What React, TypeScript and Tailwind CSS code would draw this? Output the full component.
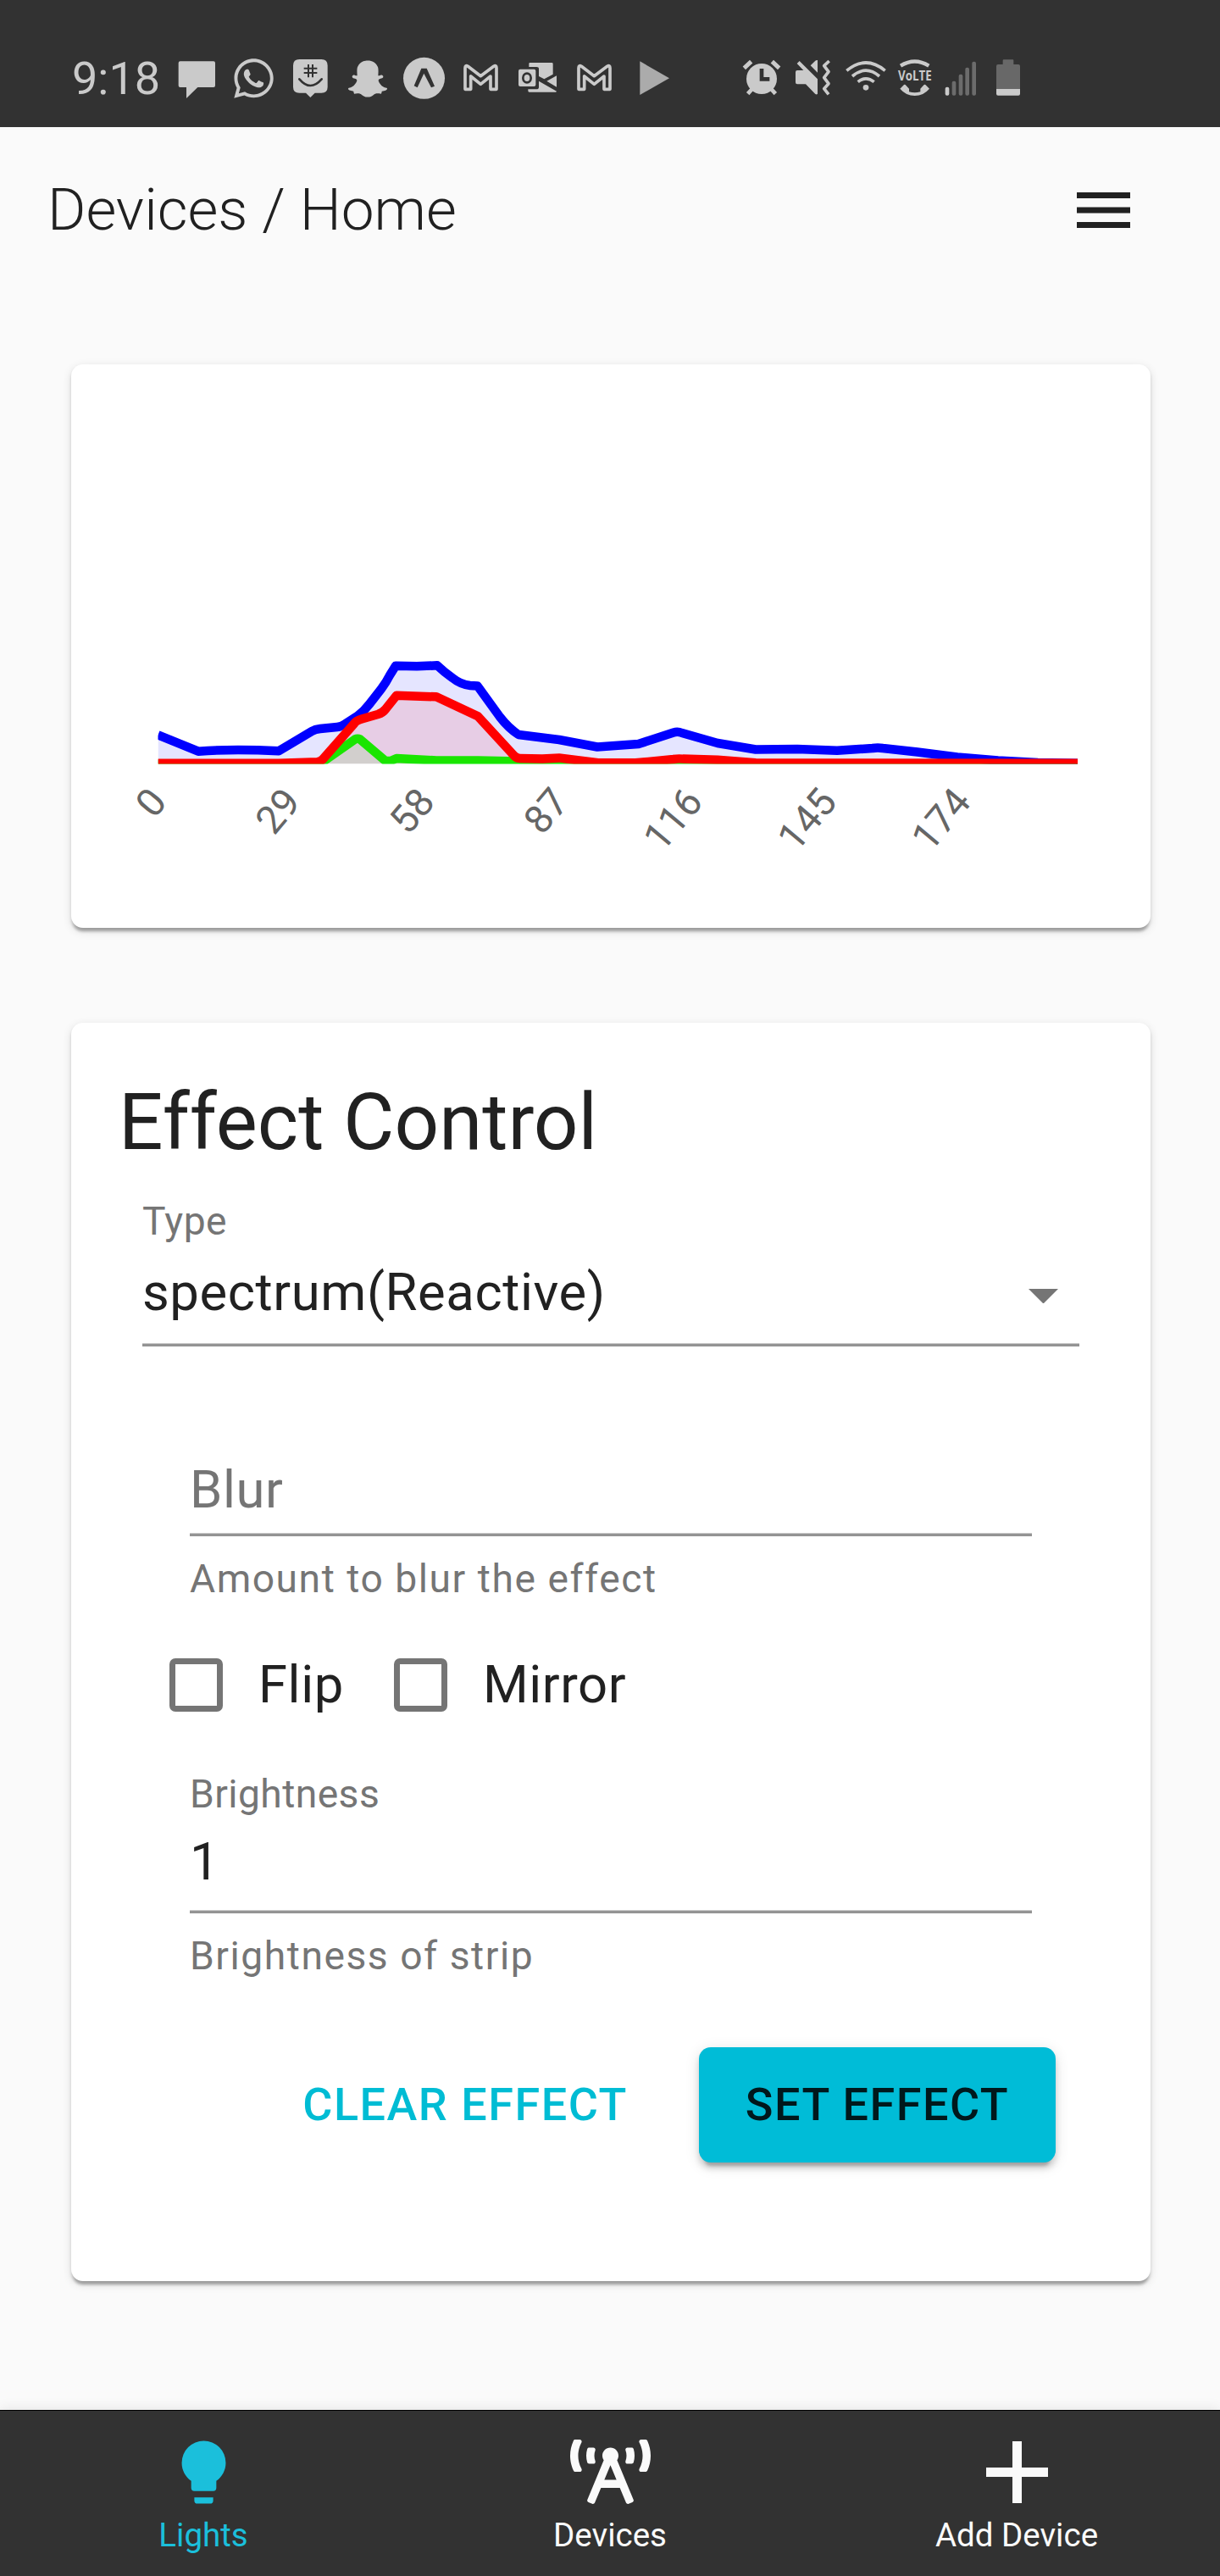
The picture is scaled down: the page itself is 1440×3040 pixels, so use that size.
import React from 'react';
import { FaBroadcastTower, FaSnapchatGhost, FaWhatsapp } from 'react-icons/fa';

const LIGHT = '#cacaca';
const DARK = '#323232';

function StatusIcon({ box, className, children }: { box: string; className?: string; children: React.ReactNode }) {
  return (
    <svg viewBox={box} className={`h-[60px] shrink-0 ${className ?? 'w-[67px]'}`} fill={LIGHT}>
      {children}
    </svg>
  );
}

function GmailIcon() {
  return (
    <StatusIcon box="312 60 201 180">
      <path
        d="M357 196V121Q357 109 367 115L412 149L458 115Q468 109 468 121V196H447V150L412 178L377 150V196Z"
        fill="none"
        stroke={LIGHT}
        strokeWidth="11"
        strokeLinejoin="round"
      />
    </StatusIcon>
  );
}

function StatusBar() {
  return (
    <div className="flex h-[150px] items-start bg-[#323232] pt-[60px]">
      <div className="w-[199px] shrink-0 pl-[85px] text-[54px] leading-[66px] text-[#cacaca]">9:18</div>
      <StatusIcon box="417 60 201 180">
        <path d="M458 97H576Q582 97 582 103V183Q582 189 576 189H520L480 228V189H458Q452 189 452 183V103Q452 97 458 97Z" />
      </StatusIcon>
      <div className="flex h-[60px] w-[67px] shrink-0 justify-center pt-[6px] text-[#cacaca]">
        <FaWhatsapp className="h-[53px] w-[53px]" />
      </div>
      <StatusIcon box="819 60 201 180">
        <path d="M880 90H958Q980 90 980 112V188Q980 209 958 209H935L919 225L903 209H880Q858 209 858 188V112Q858 90 880 90Z" />
        <path d="M912 108V154M927 108V154M896 122H943M896 138H943" stroke={DARK} strokeWidth="6" />
        <path d="M880 160Q919 206 959 160" fill="none" stroke={DARK} strokeWidth="8" strokeLinecap="round" />
      </StatusIcon>
      <div className="flex h-[60px] w-[67px] shrink-0 justify-center pt-[10px] text-[#cacaca]">
        <FaSnapchatGhost className="h-[46px] w-[46px]" />
      </div>
      <StatusIcon box="111 60 201 180">
        <circle cx="211.500" cy="157" r="73.500" />
        <path d="M202 122H221L249 185L237 190L211 140L188 190L176 184Z" fill={DARK} />
      </StatusIcon>
      <GmailIcon />
      <StatusIcon box="513 60 201 180">
        <path d="M586 102H664Q668 102 668 106V143L637 160L618 150V124Q618 117 610 117H583V105Q583 102 586 102Z" />
        <path d="M681 148V188L646 167Z" />
        <path d="M580 196H609Q618 196 618 188V167L681 203Q680 206 677 206H584Q580 206 580 202Z" />
        <rect x="546" y="125" width="61" height="61" rx="6" />
        <ellipse cx="576" cy="156" rx="14" ry="16" fill="none" stroke={DARK} strokeWidth="8" />
      </StatusIcon>
      <GmailIcon />
      <StatusIcon box="915 60 201 180">
        <path d="M976 97L1080 157L976 216Z" fill="#ababab" />
      </StatusIcon>
      <div className="w-[68px] shrink-0" />
      <StatusIcon box="90 60 180 180" className="w-[60px]">
        <circle cx="177" cy="159" r="54" />
        <path d="M115 121L140 98M214 98L239 121" stroke={LIGHT} strokeWidth="15" />
        <path d="M146 192L128 212M208 192L226 212" stroke={LIGHT} strokeWidth="14" />
        <path d="M177 123V160H205" fill="none" stroke={DARK} strokeWidth="14" />
      </StatusIcon>
      <StatusIcon box="270 60 180 180" className="w-[60px]">
        <path d="M303 129H325L302 105L311 96L375 160V212Q372 216 367 213L333 178H303Q297 178 297 172V135Q297 129 303 129Z" />
        <path d="M375 93V137L350 112L367 95Q371 92 375 93Z" />
        <path
          d="M416 96L398 113L414 134L398 155L414 176L398 194L414 214"
          fill="none"
          stroke={LIGHT}
          strokeWidth="11"
          strokeLinejoin="round"
        />
      </StatusIcon>
      <StatusIcon box="450 60 180 180" className="w-[60px]">
        <circle cx="546" cy="190" r="10" />
        <path
          d="M478 130Q546 74 614 130M498 150Q546 109 594 150M518 170Q546 147 575 170"
          fill="none"
          stroke={LIGHT}
          strokeWidth="11"
        />
      </StatusIcon>
      <StatusIcon box="630 60 180 180" className="w-[60px]">
        <path d="M669 113Q719 82 769 113" fill="none" stroke={LIGHT} strokeWidth="13" />
        <text
          x="660"
          y="166"
          fontSize="47"
          fontWeight="700"
          textLength="119"
          lengthAdjust="spacingAndGlyphs"
          style={{ fontFamily: '"Open Sans", sans-serif' }}
        >
          VoLTE
        </text>
        <path d="M667 194L681 180Q685 178 688 182L699 194V205Q719 211 739 205V194L750 182Q753 178 757 180L771 194Q750 219 719 219Q688 219 667 194Z" />
      </StatusIcon>
      <StatusIcon box="810 60 150 180" className="w-[50px]">
        <rect x="827" y="188" width="14" height="30" rx="6" />
        <g fill="#6c6c6c">
          <rect x="851" y="167" width="14" height="51" rx="6" />
          <rect x="875" y="143" width="14" height="75" rx="6" />
          <rect x="898" y="119" width="14" height="99" rx="6" />
          <rect x="922" y="98" width="14" height="120" rx="6" />
        </g>
      </StatusIcon>
      <StatusIcon box="960 60 150 180" className="w-[50px]">
        <path d="M1031 108V94Q1031 91 1034 91H1066Q1069 91 1069 94V108H1086Q1092 108 1092 114V195H1008V114Q1008 108 1014 108Z" fill="#686868" />
        <path d="M1008 195H1092V212Q1092 218 1086 218H1014Q1008 218 1008 212Z" />
      </StatusIcon>
    </div>
  );
}

const BLUE =
  'M186.500 867.300L234 886.700Q258 885 281 885T329 886.300L368 863Q372 860.700 378 860L398 858Q403 857.500 408 854L422 845Q430 839 436 831L450 813Q456 805 460 797L467 785.700L492 786.300L516 785.300Q524 793 534 800Q544 808 555 809L563.600 809.500L590 846Q600 859 612 867L660 873L705 881.500L753.600 878L795 864.500Q800 863 805 865L847 877L892 884.500L941 884L988 885.800L1030 883Q1036 882 1042 883L1083 887.500L1130 893.500L1178 897.500L1225 900L1272 900.700';
const GREEN =
  'M186.500 901.500H370Q378 901.500 384 897L419 872.500Q422 871 425 872.500L455 898L461 898L468 895L515 897.500L564 897.500L612 898.500L660 900L706 901.300H1272';
const RED =
  'M186.500 900.700H329L374 899.300Q378 899 381 896L418 854Q420 850.500 427 848.500L446 843Q452 841 455 837L468 820.700L515 822.300L564 845.300L607 892Q610 895 614 895L640 895.400L660 894.400L706 900.300L750 900.300L795 896Q800 895 806 895.600L847 896.700L892 900.300L1272 900.700';

const TICKS = ['0', '29', '58', '87', '116', '145', '174'];

function SpectrumChart() {
  const area = (d: string) => `${d}V901.500H186.500Z`;
  return (
    <svg viewBox="84 430 1274 665" className="h-[665px] w-[1274px]" fill="none">
      <defs>
        <clipPath id="plot">
          <rect x="186.500" y="500" width="1085.500" height="401.500" />
        </clipPath>
      </defs>
      <g clipPath="url(#plot)" strokeWidth="10.500" strokeLinejoin="round">
        <path d={area(BLUE)} fill="#0000ff" fillOpacity="0.1" />
        <path d={BLUE} stroke="#0000ff" />
        <path d={area(GREEN)} fill="#00ff00" fillOpacity="0.1" />
        <path d={GREEN} stroke="#00ff00" />
        <path d={area(RED)} fill="#ff0000" fillOpacity="0.1" />
        <path d={RED} stroke="#ff0000" />
      </g>
      <g fill="#666666" fontSize="46.200" textAnchor="end">
        {TICKS.map((label, i) => (
          <text key={label} transform={`translate(${186.5 + i * 158.2} 937) rotate(-50)`} y="16">
            {label}
          </text>
        ))}
      </g>
    </svg>
  );
}

const CARD =
  'rounded-[14px] bg-white shadow-[0_7px_3.5px_-3.5px_rgba(0,0,0,0.2),0_3.5px_3.5px_0_rgba(0,0,0,0.14),0_3.5px_10.5px_0_rgba(0,0,0,0.12)]';

function Underline() {
  return <div className="h-[3px] bg-[#949494] shadow-[0_-1px_0_#c9c9c9]" />;
}

function Check({ label }: { label: string }) {
  return (
    <label className="flex items-center">
      <span className="h-[63px] w-[63px] rounded-[7px] border-[7px] border-[#757575]" />
      <span className="ml-[42px] text-[61.6px] leading-[64px] tracking-[0.00938em]">{label}</span>
    </label>
  );
}

function EffectControl() {
  return (
    <section className={`h-[1485px] pt-[56px] ${CARD}`}>
      <h2 className="ml-[56px] text-[92.4px] leading-[123px]">Effect Control</h2>
      <div className="mt-[32px] ml-[84px] w-[1106px]">
        <div className="text-[46.2px] leading-[46px] tracking-[0.00938em] text-[#757575]">Type</div>
        <div className="mt-[24px] flex h-[75px] items-center justify-between">
          <span className="text-[61.6px] leading-[75px] tracking-[0.00938em]">spectrum(Reactive)</span>
          <svg viewBox="7 10 10 5" className="mt-[8px] mr-[25px] h-[17.5px] w-[35px]" fill="#757575">
            <path d="M7 10l5 5 5-5z" />
          </svg>
        </div>
        <div className="mt-[23px]">
          <Underline />
        </div>
      </div>
      <div className="mt-[133px] ml-[140px] w-[994px] text-[#757575]">
        <div className="text-[61.6px] leading-[72px] tracking-[0.00938em]">Blur</div>
        <div className="mt-[16px]">
          <Underline />
        </div>
        <div className="mt-[27px] text-[46.2px] leading-[46px] tracking-[0.03333em]">Amount to blur the effect</div>
      </div>
      <div className="mt-[70px] ml-[116px] flex h-[64px] gap-[59px]">
        <Check label="Flip" />
        <Check label="Mirror" />
      </div>
      <div className="mt-[74px] ml-[140px] w-[994px]">
        <div className="text-[46.2px] leading-[46px] tracking-[0.00938em] text-[#757575]">Brightness</div>
        <div className="mt-[21px] text-[61.6px] leading-[72px] tracking-[0.00938em]">1</div>
        <div className="mt-[22px]">
          <Underline />
        </div>
        <div className="mt-[27px] text-[46.2px] leading-[46px] tracking-[0.03333em] text-[#757575]">Brightness of strip</div>
      </div>
      <div className="mt-[85px] mr-[112px] flex h-[136px] items-stretch justify-end text-[53.9px] font-medium tracking-[0.02857em] whitespace-nowrap">
        <button className="mr-[28px] px-[56px] text-[#00bcd4]">CLEAR EFFECT</button>
        <button className="w-[421px] rounded-[14px] bg-[#00bcd7] text-black/87 shadow-[0_10.5px_3.5px_-7px_rgba(0,0,0,0.2),0_7px_7px_0_rgba(0,0,0,0.14),0_3.5px_17.5px_0_rgba(0,0,0,0.12)]">
          SET EFFECT
        </button>
      </div>
    </section>
  );
}

function NavItem({ label, className, children }: { label: string; className: string; children: React.ReactNode }) {
  return (
    <div className={`flex flex-1 flex-col items-center pt-[27px] ${className}`}>
      <div className="flex h-[90px] items-center justify-center">{children}</div>
      <span className="mt-[7px] text-[38.5px] leading-[46px]">{label}</span>
    </div>
  );
}

function BottomNav() {
  return (
    <nav className="flex h-[196px] border-t border-black bg-[#323232] shadow-[0_-2px_14px_rgba(0,0,0,0.08)]">
      <NavItem label="Lights" className="text-[#1bbfdb]">
        <svg viewBox="0 0 24 24" className="h-[89px] w-[89px]" fill="currentColor">
          <path d="M12 2a7 7 0 0 0-7 7c0 2.380 1.190 4.470 3 5.740V17a1 1 0 0 0 1 1h6a1 1 0 0 0 1-1v-2.260c1.810-1.270 3-3.360 3-5.740a7 7 0 0 0-7-7M9 21a1 1 0 0 0 1 1h4a1 1 0 0 0 1-1v-1H9v1z" />
        </svg>
      </NavItem>
      <NavItem label="Devices" className="text-[#fafafa]">
        <FaBroadcastTower className="h-[76px] w-[95px]" />
      </NavItem>
      <NavItem label="Add Device" className="text-[#fafafa]">
        <svg viewBox="0 0 73 73" className="h-[73px] w-[73px]" fill="currentColor">
          <path d="M31 0h11v31h31v11H42v31H31V42H0V31h31z" />
        </svg>
      </NavItem>
    </nav>
  );
}

export default function App() {
  return (
    <div className="flex h-[3040px] w-[1440px] flex-col overflow-hidden bg-[#fafafa] font-[Roboto,sans-serif] text-[#212121]">
      <StatusBar />
      <header className="flex h-[196px] shrink-0 items-center justify-between pr-[106px] pl-[56px]">
        <h1 className="text-[69.3px] leading-[84px] font-light">Devices / Home</h1>
        <svg viewBox="3 6 18 12" className="h-[42px] w-[63px]" fill="#212121">
          <path d="M3 18h18v-2H3v2zm0-5h18v-2H3v2zm0-7v2h18V6H3z" />
        </svg>
      </header>
      <main className="flex h-[2498px] shrink-0 flex-col gap-[112px] pt-[84px] pr-[82px] pl-[84px]">
        <section className={`h-[665px] ${CARD}`}>
          <SpectrumChart />
        </section>
        <EffectControl />
      </main>
      <BottomNav />
    </div>
  );
}
